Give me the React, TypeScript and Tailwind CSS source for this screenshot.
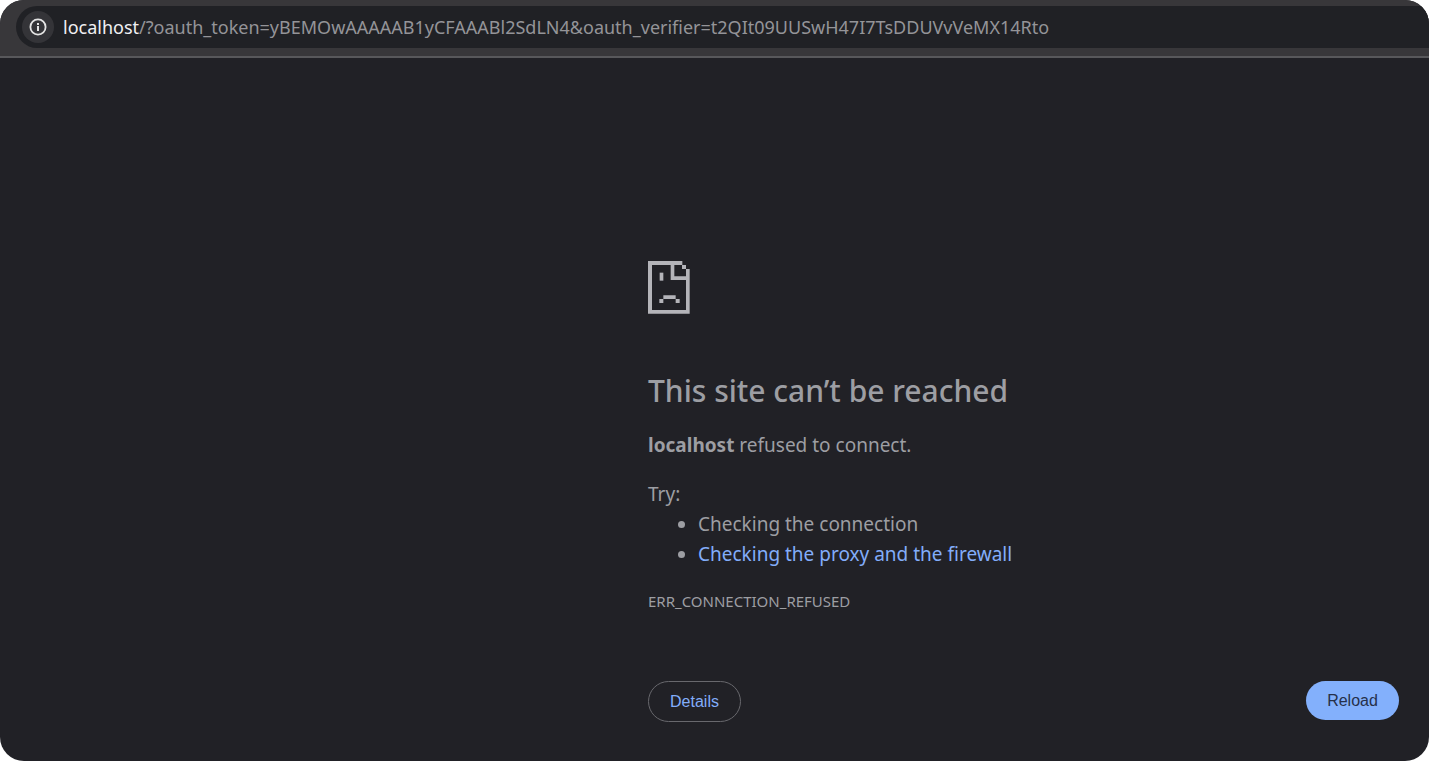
const suggestions = [
  { label: 'Checking the connection' },
  { label: 'Checking the proxy and the firewall', href: '#buttons' },
]

function InfoIcon() {
  return (
    <svg width="18" height="18" viewBox="0 0 18 18" fill="none" aria-hidden="true">
      <circle cx="9" cy="9" r="7.6" stroke="#e3e3e3" strokeWidth="1.8" />
      <rect x="8" y="8" width="2" height="5" fill="#e3e3e3" />
      <rect x="8" y="5" width="2" height="2" fill="#e3e3e3" />
    </svg>
  )
}

function SadPageIcon() {
  return (
    <svg width="42" height="53" viewBox="0 0 126 159" fill="#b4b4b9" aria-hidden="true">
      <path d="M0 0H103V12H12V147H114V57H68V12H79V46H114V24H125V158H0Z" />
      <rect x="102" y="12" width="12" height="12" />
      <rect x="35" y="35" width="11" height="24" />
      <path d="M46 103H83V114H95V126H83V114H46V126H34V114H46Z" />
    </svg>
  )
}

function AddressBar() {
  return (
    <header className="border-b-2 border-[#58585b] bg-[#38373a] pt-[6px] pb-2 pl-4">
      <div className="flex h-[42px] items-center gap-[9px] rounded-l-full bg-[#202125] pl-[6px]">
        <button
          className="flex h-8 w-8 shrink-0 items-center justify-center rounded-full bg-[#343438]"
          aria-label="View site information"
        >
          <InfoIcon />
        </button>
        <span className="truncate text-[18px] leading-6 text-[#949498]">
          <span className="text-[#f0f0f3]">localhost</span>
          /?oauth_token=yBEMOwAAAAAB1yCFAAABl2SdLN4&amp;oauth_verifier=t2QIt09UUSwH47I7TsDDUVvVeMX14Rto
        </span>
      </div>
    </header>
  )
}

export default function App() {
  return (
    <div className="min-h-screen bg-white">
      <div className="min-h-screen overflow-hidden rounded-3xl bg-[#212126] font-['Noto_Sans',sans-serif] text-[#9d9ea3]">
        <AddressBar />

        <main className="mr-[30px] ml-auto max-w-[751px] pt-[203px] pb-8">
          <SadPageIcon />

          <h1 className="mt-[57px] text-[30px] leading-10 font-medium">This site can’t be reached</h1>
          <p className="mt-[19px] text-[19px] leading-[30px]">
            <strong className="font-bold">localhost</strong> refused to connect.
          </p>

          <div className="mt-[19px] text-[19px] leading-[30px]">
            <p>Try:</p>
            <ul className="list-disc pl-[50px]">
              {suggestions.map(({ label, href }) => (
                <li key={label}>
                  {href ? <a href={href} className="text-[#83adfa]">{label}</a> : label}
                </li>
              ))}
            </ul>
          </div>

          <p className="mt-5 text-[15px] leading-6">ERR_CONNECTION_REFUSED</p>

          <div id="buttons" className="mt-[68px] flex items-start justify-between font-['Liberation_Sans',sans-serif] text-base">
            <button className="h-[41px] w-[93px] rounded-full border border-[#68686d] text-[#83adfa]">
              Details
            </button>
            <button className="h-[39px] w-[93px] rounded-full bg-[#83b0fc] text-[#26304a]">
              Reload
            </button>
          </div>
        </main>
      </div>
    </div>
  )
}
